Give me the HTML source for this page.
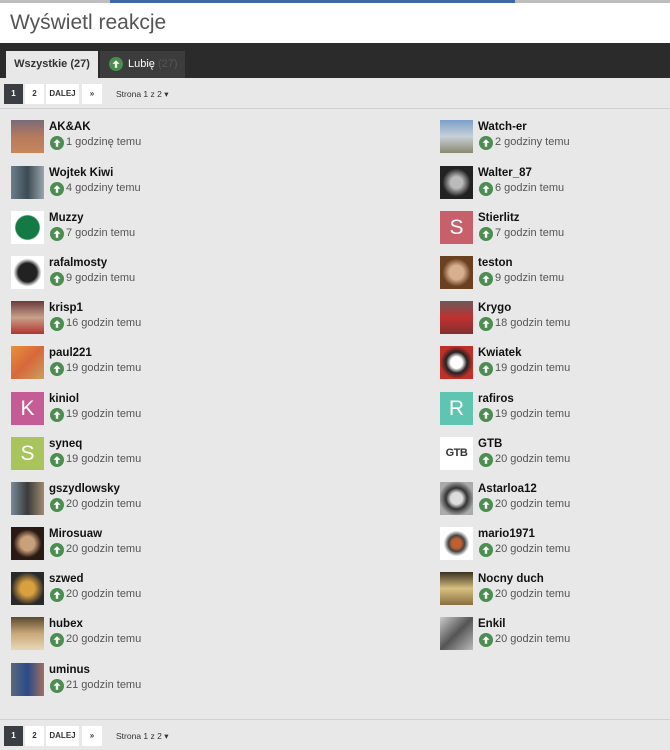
<!DOCTYPE html>
<html><head><meta charset="utf-8">
<style>
*{margin:0;padding:0;box-sizing:border-box}
body{width:670px;height:750px;background:#e9e8e8;font-family:"Liberation Sans",sans-serif;position:relative;overflow:hidden}
.top{position:absolute;left:0;top:0;width:670px;height:3px;background:#bdbdbd}
.top i{position:absolute;left:110px;width:405px;height:3px;background:#3d67a5}
.hdr{position:absolute;left:0;top:3px;width:670px;height:40px;background:#fff}
.hdr h1{font-weight:normal;font-size:21px;color:#555;position:absolute;left:10px;top:8px}
.bar{position:absolute;left:0;top:43px;width:670px;height:35px;background:#2b2b2b}
.t1{position:absolute;left:6px;top:8px;width:92px;height:27px;background:#e9e8e8;font-weight:bold;font-size:11px;color:#333;text-align:center;line-height:27px}
.t2{position:absolute;left:100px;top:8px;width:85px;height:27px;background:#3c3c3c;font-size:11px;color:#fff;line-height:27px;padding-left:28px}
.t2 .ic{position:absolute;left:9px;top:6px}
.t2 span{color:#555}
.pg{position:absolute;left:4px;height:20px}
.pg b{position:absolute;top:0;height:20px;background:#fff;font-size:8px;color:#333;text-align:center;line-height:20px}
.pg .s{position:absolute;left:112px;top:0;font-size:8.5px;color:#333;line-height:20px;white-space:nowrap}
.line{position:absolute;left:0;width:670px;height:1px;background:#d0d0d0}
.r{position:absolute;height:34px}
.av{position:absolute;left:0;top:0;width:33px;height:33px;color:#fff;font-size:21px;text-align:center;line-height:33px}
.n{position:absolute;left:38px;top:1px;font-weight:bold;font-size:11.5px;color:#111;white-space:nowrap}
.tm{position:absolute;left:55px;top:16px;font-size:11px;color:#555;white-space:nowrap}
.r .ic{position:absolute;left:39px;top:16px}
.ic{width:14px;height:14px;border-radius:50%;background:#4b8e50}
.ic svg{display:block}
</style></head><body>
<div class="top"><i></i></div>
<div class="hdr"><h1>Wyświetl reakcje</h1></div>
<div class="bar">
<div class="t1">Wszystkie (27)</div>
<div class="t2"><div class="ic"><svg width="14" height="14" viewBox="0 0 14 14"><path d="M7 3.2L3.5 6.8H5.8V10.8H8.2V6.8H10.5Z" fill="#fff"/></svg></div>Lubię <span>(27)</span></div>
</div>
<div class="pg" style="top:84px"><b style="left:0;width:19px;background:#3a3d42;color:#fff">1</b><b style="left:21px;width:19px">2</b><b style="left:42px;width:33px">DALEJ</b><b style="left:78px;width:20px">»</b><span class="s">Strona 1 z 2 ▾</span></div>
<div class="line" style="top:108px"></div>
<div class="line" style="top:719px"></div>
<div class="pg" style="top:726px"><b style="left:0;width:19px;background:#3a3d42;color:#fff">1</b><b style="left:21px;width:19px">2</b><b style="left:42px;width:33px">DALEJ</b><b style="left:78px;width:20px">»</b><span class="s">Strona 1 z 2 ▾</span></div>

<div class="r" style="left:11px;top:120px"><div class="av" style="background:linear-gradient(#7a6a78,#b67a5e,#c7875a)"></div><div class="n">AK&amp;AK</div><div class="ic"><svg width="14" height="14" viewBox="0 0 14 14"><path d="M7 3.2L3.5 6.8H5.8V10.8H8.2V6.8H10.5Z" fill="#fff"/></svg></div><div class="tm">1 godzinę temu</div></div>
<div class="r" style="left:11px;top:166px"><div class="av" style="background:linear-gradient(90deg,#6c7f8c,#3d4b55,#9aa6ad)"></div><div class="n">Wojtek Kiwi</div><div class="ic"><svg width="14" height="14" viewBox="0 0 14 14"><path d="M7 3.2L3.5 6.8H5.8V10.8H8.2V6.8H10.5Z" fill="#fff"/></svg></div><div class="tm">4 godziny temu</div></div>
<div class="r" style="left:11px;top:211px"><div class="av" style="background:radial-gradient(circle,#137a45 50%,#fff 55%)"></div><div class="n">Muzzy</div><div class="ic"><svg width="14" height="14" viewBox="0 0 14 14"><path d="M7 3.2L3.5 6.8H5.8V10.8H8.2V6.8H10.5Z" fill="#fff"/></svg></div><div class="tm">7 godzin temu</div></div>
<div class="r" style="left:11px;top:256px"><div class="av" style="background:radial-gradient(circle,#222 40%,#999 50%,#fff 60%)"></div><div class="n">rafalmosty</div><div class="ic"><svg width="14" height="14" viewBox="0 0 14 14"><path d="M7 3.2L3.5 6.8H5.8V10.8H8.2V6.8H10.5Z" fill="#fff"/></svg></div><div class="tm">9 godzin temu</div></div>
<div class="r" style="left:11px;top:301px"><div class="av" style="background:linear-gradient(#6b3a3a,#c9a08a,#b0342f)"></div><div class="n">krisp1</div><div class="ic"><svg width="14" height="14" viewBox="0 0 14 14"><path d="M7 3.2L3.5 6.8H5.8V10.8H8.2V6.8H10.5Z" fill="#fff"/></svg></div><div class="tm">16 godzin temu</div></div>
<div class="r" style="left:11px;top:346px"><div class="av" style="background:linear-gradient(135deg,#e8903a,#d8683a,#c9a060)"></div><div class="n">paul221</div><div class="ic"><svg width="14" height="14" viewBox="0 0 14 14"><path d="M7 3.2L3.5 6.8H5.8V10.8H8.2V6.8H10.5Z" fill="#fff"/></svg></div><div class="tm">19 godzin temu</div></div>
<div class="r" style="left:11px;top:392px"><div class="av" style="background:#c55c96">K</div><div class="n">kiniol</div><div class="ic"><svg width="14" height="14" viewBox="0 0 14 14"><path d="M7 3.2L3.5 6.8H5.8V10.8H8.2V6.8H10.5Z" fill="#fff"/></svg></div><div class="tm">19 godzin temu</div></div>
<div class="r" style="left:11px;top:437px"><div class="av" style="background:#a9c45c">S</div><div class="n">syneq</div><div class="ic"><svg width="14" height="14" viewBox="0 0 14 14"><path d="M7 3.2L3.5 6.8H5.8V10.8H8.2V6.8H10.5Z" fill="#fff"/></svg></div><div class="tm">19 godzin temu</div></div>
<div class="r" style="left:11px;top:482px"><div class="av" style="background:linear-gradient(90deg,#7a8a9a,#3b3b3b,#a08a70)"></div><div class="n">gszydlowsky</div><div class="ic"><svg width="14" height="14" viewBox="0 0 14 14"><path d="M7 3.2L3.5 6.8H5.8V10.8H8.2V6.8H10.5Z" fill="#fff"/></svg></div><div class="tm">20 godzin temu</div></div>
<div class="r" style="left:11px;top:527px"><div class="av" style="background:radial-gradient(circle,#c9a07a 30%,#2a1a14 60%)"></div><div class="n">Mirosuaw</div><div class="ic"><svg width="14" height="14" viewBox="0 0 14 14"><path d="M7 3.2L3.5 6.8H5.8V10.8H8.2V6.8H10.5Z" fill="#fff"/></svg></div><div class="tm">20 godzin temu</div></div>
<div class="r" style="left:11px;top:572px"><div class="av" style="background:radial-gradient(circle,#d9a040 30%,#2a2a2a 70%)"></div><div class="n">szwed</div><div class="ic"><svg width="14" height="14" viewBox="0 0 14 14"><path d="M7 3.2L3.5 6.8H5.8V10.8H8.2V6.8H10.5Z" fill="#fff"/></svg></div><div class="tm">20 godzin temu</div></div>
<div class="r" style="left:11px;top:617px"><div class="av" style="background:linear-gradient(#5a4a30,#c9a878,#e8d8b8)"></div><div class="n">hubex</div><div class="ic"><svg width="14" height="14" viewBox="0 0 14 14"><path d="M7 3.2L3.5 6.8H5.8V10.8H8.2V6.8H10.5Z" fill="#fff"/></svg></div><div class="tm">20 godzin temu</div></div>
<div class="r" style="left:11px;top:663px"><div class="av" style="background:linear-gradient(90deg,#5a6a7a,#2a4a8a,#a07060)"></div><div class="n">uminus</div><div class="ic"><svg width="14" height="14" viewBox="0 0 14 14"><path d="M7 3.2L3.5 6.8H5.8V10.8H8.2V6.8H10.5Z" fill="#fff"/></svg></div><div class="tm">21 godzin temu</div></div>

<div class="r" style="left:440px;top:120px"><div class="av" style="background:linear-gradient(#7aa0c8,#c8d0d8,#8a8a70)"></div><div class="n">Watch-er</div><div class="ic"><svg width="14" height="14" viewBox="0 0 14 14"><path d="M7 3.2L3.5 6.8H5.8V10.8H8.2V6.8H10.5Z" fill="#fff"/></svg></div><div class="tm">2 godziny temu</div></div>
<div class="r" style="left:440px;top:166px"><div class="av" style="background:radial-gradient(circle,#bbb 25%,#222 60%)"></div><div class="n">Walter_87</div><div class="ic"><svg width="14" height="14" viewBox="0 0 14 14"><path d="M7 3.2L3.5 6.8H5.8V10.8H8.2V6.8H10.5Z" fill="#fff"/></svg></div><div class="tm">6 godzin temu</div></div>
<div class="r" style="left:440px;top:211px"><div class="av" style="background:#c8606c">S</div><div class="n">Stierlitz</div><div class="ic"><svg width="14" height="14" viewBox="0 0 14 14"><path d="M7 3.2L3.5 6.8H5.8V10.8H8.2V6.8H10.5Z" fill="#fff"/></svg></div><div class="tm">7 godzin temu</div></div>
<div class="r" style="left:440px;top:256px"><div class="av" style="background:radial-gradient(circle,#d8b090 30%,#6a4020 60%)"></div><div class="n">teston</div><div class="ic"><svg width="14" height="14" viewBox="0 0 14 14"><path d="M7 3.2L3.5 6.8H5.8V10.8H8.2V6.8H10.5Z" fill="#fff"/></svg></div><div class="tm">9 godzin temu</div></div>
<div class="r" style="left:440px;top:301px"><div class="av" style="background:linear-gradient(#6a5a5a,#c03030,#803030)"></div><div class="n">Krygo</div><div class="ic"><svg width="14" height="14" viewBox="0 0 14 14"><path d="M7 3.2L3.5 6.8H5.8V10.8H8.2V6.8H10.5Z" fill="#fff"/></svg></div><div class="tm">18 godzin temu</div></div>
<div class="r" style="left:440px;top:346px"><div class="av" style="background:radial-gradient(circle,#fff 25%,#222 45%,#c03028 70%)"></div><div class="n">Kwiatek</div><div class="ic"><svg width="14" height="14" viewBox="0 0 14 14"><path d="M7 3.2L3.5 6.8H5.8V10.8H8.2V6.8H10.5Z" fill="#fff"/></svg></div><div class="tm">19 godzin temu</div></div>
<div class="r" style="left:440px;top:392px"><div class="av" style="background:#5fc4b0">R</div><div class="n">rafiros</div><div class="ic"><svg width="14" height="14" viewBox="0 0 14 14"><path d="M7 3.2L3.5 6.8H5.8V10.8H8.2V6.8H10.5Z" fill="#fff"/></svg></div><div class="tm">19 godzin temu</div></div>
<div class="r" style="left:440px;top:437px"><div class="av" style="background:#fff;color:#333;font-size:11px;font-weight:bold;letter-spacing:-0.5px">GTB</div><div class="n">GTB</div><div class="ic"><svg width="14" height="14" viewBox="0 0 14 14"><path d="M7 3.2L3.5 6.8H5.8V10.8H8.2V6.8H10.5Z" fill="#fff"/></svg></div><div class="tm">20 godzin temu</div></div>
<div class="r" style="left:440px;top:482px"><div class="av" style="background:radial-gradient(circle,#ddd 25%,#333 45%,#aaa 75%)"></div><div class="n">Astarloa12</div><div class="ic"><svg width="14" height="14" viewBox="0 0 14 14"><path d="M7 3.2L3.5 6.8H5.8V10.8H8.2V6.8H10.5Z" fill="#fff"/></svg></div><div class="tm">20 godzin temu</div></div>
<div class="r" style="left:440px;top:527px"><div class="av" style="background:radial-gradient(circle,#c06030 20%,#444 35%,#fff 55%)"></div><div class="n">mario1971</div><div class="ic"><svg width="14" height="14" viewBox="0 0 14 14"><path d="M7 3.2L3.5 6.8H5.8V10.8H8.2V6.8H10.5Z" fill="#fff"/></svg></div><div class="tm">20 godzin temu</div></div>
<div class="r" style="left:440px;top:572px"><div class="av" style="background:linear-gradient(#3a3020,#d8c080,#8a7040)"></div><div class="n">Nocny duch</div><div class="ic"><svg width="14" height="14" viewBox="0 0 14 14"><path d="M7 3.2L3.5 6.8H5.8V10.8H8.2V6.8H10.5Z" fill="#fff"/></svg></div><div class="tm">20 godzin temu</div></div>
<div class="r" style="left:440px;top:617px"><div class="av" style="background:linear-gradient(135deg,#ccc,#555,#bbb)"></div><div class="n">Enkil</div><div class="ic"><svg width="14" height="14" viewBox="0 0 14 14"><path d="M7 3.2L3.5 6.8H5.8V10.8H8.2V6.8H10.5Z" fill="#fff"/></svg></div><div class="tm">20 godzin temu</div></div>
</body></html>
